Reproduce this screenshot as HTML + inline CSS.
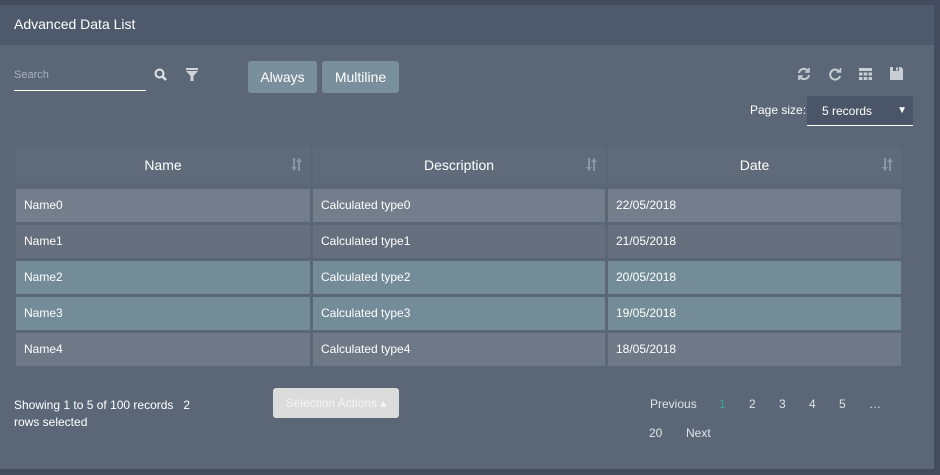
<!DOCTYPE html>
<html><head><style>
body{margin:0;width:940px;height:475px;background:#434c5c;font-family:"Liberation Sans",sans-serif;color:#fff;overflow:hidden;position:relative}
.panel{position:absolute;left:0;top:5px;width:934px;height:464px;background:#5b6677}
.hdr{position:absolute;left:0;top:0;width:934px;height:40px;background:#4e596b;font-size:14px;line-height:38px;padding-left:14px;box-sizing:border-box}
.abs{position:absolute}
.btn{position:absolute;top:56px;height:32px;background:#798f9b;border-radius:3px;font-size:14px;line-height:32px;text-align:center}
.cell{position:absolute;font-size:12px;line-height:33px;padding-left:8px;box-sizing:border-box;height:33px}
.th{position:absolute;top:142px;height:36px;background:#5f6a7b;font-size:14px;line-height:36px;text-align:center}
.th svg{position:absolute;right:8px;top:11px}
.pg{position:absolute;font-size:12px;color:#dfe3e8}
</style></head><body>
<div class="panel">
<div class="hdr">Advanced Data List</div>
<div class="abs" style="left:14px;top:64px;font-size:11px;color:#aab2bd">Search</div>
<div class="abs" style="left:14px;top:85px;width:132px;height:1px;background:#fff"></div>
<svg class="abs" style="left:154px;top:63px" width="14" height="14" viewBox="0 0 14 14"><circle cx="5.5" cy="5.5" r="4" fill="none" stroke="#e0e4e8" stroke-width="2"/><path d="M8.5 8.5L12 12" stroke="#e0e4e8" stroke-width="2.4"/></svg>
<svg class="abs" style="left:185px;top:63px" width="14" height="13" viewBox="0 0 14 13"><path d="M1 0h12v2H1zM1 3h12L8.5 8v5h-3V8z" fill="#d0d5db"/></svg>
<div class="btn" style="left:248px;width:69px">Always</div>
<div class="btn" style="left:322px;width:77px">Multiline</div>
<svg class="abs" style="left:797px;top:62px" width="14" height="14" viewBox="0 0 14 14" fill="none" stroke="#c8ced6" stroke-width="2"><path d="M2 6a5 5 0 0 1 9-2"/><path d="M12 8a5 5 0 0 1-9 2"/><path d="M12 1v4H8M2 13V9h4" stroke-width="1.6"/></svg>
<svg class="abs" style="left:828px;top:62px" width="14" height="14" viewBox="0 0 14 14" fill="none" stroke="#c8ced6" stroke-width="2"><path d="M11.5 5A5 5 0 1 0 12 9"/><path d="M12.5 1v4h-4" stroke-width="1.6"/></svg>
<svg class="abs" style="left:859px;top:63px" width="13" height="12" viewBox="0 0 13 12" fill="#c8ced6"><rect x="0" y="0" width="13" height="3"/><rect x="0" y="4.5" width="3.5" height="3"/><rect x="4.7" y="4.5" width="3.6" height="3"/><rect x="9.5" y="4.5" width="3.5" height="3"/><rect x="0" y="9" width="3.5" height="3"/><rect x="4.7" y="9" width="3.6" height="3"/><rect x="9.5" y="9" width="3.5" height="3"/></svg>
<svg class="abs" style="left:890px;top:62px" width="13" height="13" viewBox="0 0 13 13" fill="#c8ced6"><path d="M0 0h11l2 2v11H0z"/><rect x="3" y="0" width="6" height="4" fill="#5b6677"/><rect x="6" y="0.5" width="2" height="3"/></svg>
<div class="abs" style="left:750px;top:98px;font-size:12px">Page size:</div>
<div class="abs" style="left:807px;top:91px;width:106px;height:30px;background:#4a5568;border-bottom:1px solid #fff;font-size:12px;line-height:30px;box-sizing:border-box;padding-left:15px">5 records<span style="position:absolute;right:6px;font-size:10px">▼</span></div>
<div class="th" style="left:16px;width:294px">Name<svg width="11" height="13" viewBox="0 0 11 13" fill="#8c96a3"><path d="M2 0h2v9h2L3 13 0 9h2zM7 4h2v9H7zM5 4l3-4 3 4z"/></svg></div>
<div class="th" style="left:313px;width:292px">Description<svg width="11" height="13" viewBox="0 0 11 13" fill="#8c96a3"><path d="M2 0h2v9h2L3 13 0 9h2zM7 4h2v9H7zM5 4l3-4 3 4z"/></svg></div>
<div class="th" style="left:608px;width:293px">Date<svg width="11" height="13" viewBox="0 0 11 13" fill="#8c96a3"><path d="M2 0h2v9h2L3 13 0 9h2zM7 4h2v9H7zM5 4l3-4 3 4z"/></svg></div>

<div class="cell" style="left:16px;top:184px;width:294px;background:#737d8b">Name0</div>
<div class="cell" style="left:313px;top:184px;width:292px;background:#737d8b">Calculated type0</div>
<div class="cell" style="left:608px;top:184px;width:293px;background:#737d8b">22/05/2018</div>
<div class="cell" style="left:16px;top:220px;width:294px;background:#666f7d">Name1</div>
<div class="cell" style="left:313px;top:220px;width:292px;background:#666f7d">Calculated type1</div>
<div class="cell" style="left:608px;top:220px;width:293px;background:#666f7d">21/05/2018</div>
<div class="cell" style="left:16px;top:256px;width:294px;background:#738c97">Name2</div>
<div class="cell" style="left:313px;top:256px;width:292px;background:#738c97">Calculated type2</div>
<div class="cell" style="left:608px;top:256px;width:293px;background:#738c97">20/05/2018</div>
<div class="cell" style="left:16px;top:292px;width:294px;background:#738c97">Name3</div>
<div class="cell" style="left:313px;top:292px;width:292px;background:#738c97">Calculated type3</div>
<div class="cell" style="left:608px;top:292px;width:293px;background:#738c97">19/05/2018</div>
<div class="cell" style="left:16px;top:328px;width:294px;background:#6e7886">Name4</div>
<div class="cell" style="left:313px;top:328px;width:292px;background:#6e7886">Calculated type4</div>
<div class="cell" style="left:608px;top:328px;width:293px;background:#6e7886">18/05/2018</div>

<div class="abs" style="left:14px;top:392px;font-size:12px;line-height:17px;width:200px">Showing 1 to 5 of 100 records &nbsp;&nbsp;2<br>rows selected</div>
<div class="abs" style="left:273px;top:383px;width:126px;height:30px;background:#dcdcdc;border-radius:3px;color:#f5f5f5;font-size:12px;line-height:30px;text-align:center">Selection Actions ▴</div>
<div class="pg" style="left:650px;top:392px">Previous</div>
<div class="pg" style="left:719px;top:392px;color:#3fa38f">1</div>
<div class="pg" style="left:749px;top:392px">2</div>
<div class="pg" style="left:779px;top:392px">3</div>
<div class="pg" style="left:809px;top:392px">4</div>
<div class="pg" style="left:839px;top:392px">5</div>
<div class="pg" style="left:869px;top:392px">…</div>
<div class="pg" style="left:649px;top:421px">20</div>
<div class="pg" style="left:686px;top:421px">Next</div>
</div>
</body></html>
